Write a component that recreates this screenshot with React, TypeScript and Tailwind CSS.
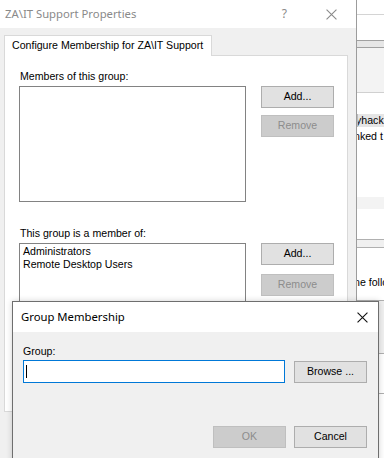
import React from "react";

const sans = { fontFamily: '"Liberation Sans", Arial, sans-serif' };
const ui = { fontFamily: '"Noto Sans", "Open Sans", sans-serif' };

function Btn({ label, disabled, className = "" }: { label: string; disabled?: boolean; className?: string }) {
  return (
    <div
      className={
        "flex h-[22px] w-[73px] items-center justify-center border text-[10.6px] " +
        (disabled ? "border-[#bfbfbf] bg-[#cccccc] text-[#8d8d8d] " : "border-[#adadad] bg-[#e1e1e1] text-black ") +
        className
      }
    >
      {label}
    </div>
  );
}

function CloseX({ color, size = 10 }: { color: string; size?: number }) {
  return (
    <svg width={size} height={size} viewBox="0 0 10 10">
      <path d="M0.5 0.5 L9.5 9.5 M9.5 0.5 L0.5 9.5" stroke={color} strokeWidth="1" fill="none" />
    </svg>
  );
}

export default function App() {
  return (
    <div className="relative h-[458px] w-[384px] overflow-hidden bg-white" style={sans}>
      {/* background window at right */}
      <div className="absolute left-[357px] top-0 flex h-[458px] w-[30px] flex-col bg-white text-[10.6px] text-black">
        <div className="h-[15px] border-b border-[#d4d4d4]" />
        <div className="h-[25px]" />
        <div className="h-[8px] border-y border-[#a0a0a0] bg-[#e6e6e6]" />
        <div className="h-[44px] bg-[#f3f3f3]" />
        <div className="h-[22px] border-t border-[#d0d0d0]" />
        <div className="flex h-[13px] items-center overflow-hidden whitespace-nowrap border-l border-[#bbbbbb] bg-[#e5e5e5]">
          <span className="ml-[-2px]">yhack</span>
        </div>
        <div className="flex h-[20px] items-center overflow-hidden whitespace-nowrap">
          <span className="ml-[-3px]">nked t</span>
        </div>
        <div className="h-[50px]" />
        <div className="h-[12px] bg-[#f3f3f3]" />
        <div className="h-[30px]" />
        <div className="h-[9px] border-y border-[#b0b0b0] bg-[#f0f0f0]" />
        <div className="h-[27px]" />
        <div className="flex h-[16px] items-center overflow-hidden whitespace-nowrap">
          <span className="ml-[-3px]">ne follo</span>
        </div>
        <div className="h-[10px] border-b border-[#b0b0b0]" />
        <div className="h-[52px] bg-[#f0f0f0]" />
        <div className="h-[40px] border-t border-[#b0b0b0]" />
        <div className="h-[20px] border-t border-[#b0b0b0]" />
      </div>

      {/* Properties dialog */}
      <div className="absolute left-[-1px] top-0 flex h-[470px] w-[358px] flex-col border-r border-[#9c9c9c] bg-[#f0f0f0]">
        <div className="flex h-[28px] shrink-0 items-center bg-white" style={ui}>
          <span className="ml-[6px] text-[11.3px] text-[#8a8a8a]">ZA\IT Support Properties</span>
          <span className="ml-auto mr-[39px] text-[12px] text-[#8a8a8a]">?</span>
          <span className="mr-[19px] flex items-center">
            <CloseX color="#8a8a8a" size={11} />
          </span>
        </div>
        <div className="flex flex-col pl-[5px] pt-[7px]">
          <div className="relative z-10 flex h-[21px] w-[208px] items-center border border-b-0 border-[#d9d9d9] bg-white pl-[7px] text-[10.6px] text-black">
            Configure Membership for ZA\IT Support
          </div>
          <div className="-mt-[1px] flex h-[357px] w-[344px] flex-col border border-[#d9d9d9] bg-white pl-[14px] text-[10.6px] text-black">
            <div className="mt-[14px] h-[13px] pl-[1px] leading-[13px]">Members of this group:</div>
            <div className="mt-[3px] flex">
              <div className="h-[116px] w-[227px] border border-[#828282] bg-white" />
              <div className="ml-[15px] flex flex-col gap-[7px]">
                <Btn label="Add..." />
                <Btn label="Remove" disabled />
              </div>
            </div>
            <div className="mt-[25px] h-[13px] pl-[1px] leading-[13px]">This group is a member of:</div>
            <div className="mt-[3px] flex">
              <div className="flex h-[116px] w-[227px] flex-col border border-[#828282] bg-white pl-[3px] pt-[1px] leading-[13px]">
                <span>Administrators</span>
                <span>Remote Desktop Users</span>
              </div>
              <div className="ml-[15px] flex flex-col gap-[9px]">
                <Btn label="Add..." />
                <Btn label="Remove" disabled />
              </div>
            </div>
          </div>
        </div>
      </div>

      {/* Group Membership dialog */}
      <div className="absolute left-[12px] top-[301px] flex h-[170px] w-[367px] flex-col border border-[#6e6e6e] bg-[#f0f0f0] shadow-[0_0_6px_rgba(0,0,0,0.18)]">
        <div className="flex h-[30px] shrink-0 items-center bg-white" style={ui}>
          <span className="ml-[8px] text-[11.3px] text-black">Group Membership</span>
          <span className="ml-auto mr-[10px] flex items-center">
            <CloseX color="#111" size={11} />
          </span>
        </div>
        <div className="flex flex-col pl-[10px] text-[10.6px] text-black">
          <div className="mt-[13px] h-[13px] leading-[13px]">Group:</div>
          <div className="mt-[2px] flex items-start">
            <div className="flex h-[23px] w-[262px] items-center border border-[#0078d7] bg-white pl-[2px]">
              <div className="h-[13px] w-[1px] bg-black" />
            </div>
            <Btn label="Browse ..." className="ml-[9px] mt-[1px]" />
          </div>
          <div className="mt-[43px] flex">
            <Btn label="OK" disabled className="ml-[190px]" />
            <Btn label="Cancel" className="ml-[8px]" />
          </div>
        </div>
      </div>
    </div>
  );
}
